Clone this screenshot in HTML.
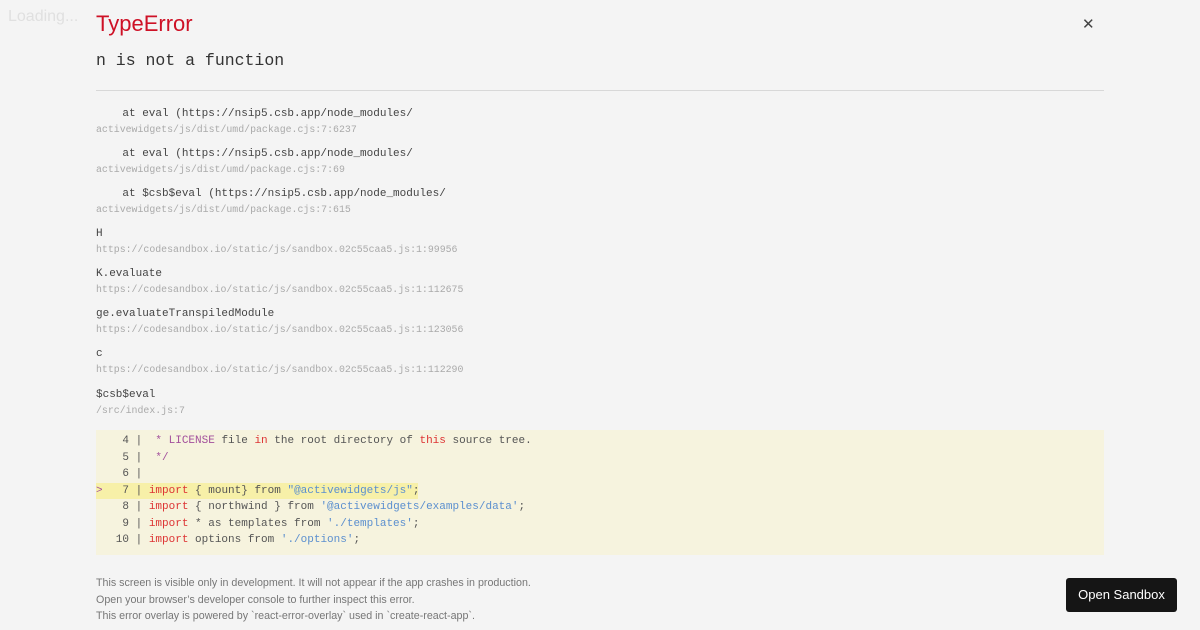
<!DOCTYPE html>
<html><head><style>
body{margin:0;width:1200px;height:630px;background:#f4f4f4;overflow:hidden;position:relative;font-family:"Liberation Sans",sans-serif}
.a{position:absolute}
.load{left:8px;top:8px;font-size:16px;color:#e0e0e0}
.title{left:96px;top:11px;font-size:22px;color:#ce1126}
.msg{left:96px;top:51px;font-family:"Liberation Mono",monospace;font-size:16.5px;color:#333}
.hr{left:96px;top:90px;width:1008px;height:1px;background:#d8d8d8}
.x{left:1082px;top:15px;font-size:15px;color:#444;font-weight:300}
.f{position:absolute;left:96px;font-family:"Liberation Mono",monospace}
.f .m{font-size:11px;color:#444;white-space:pre;height:16px}
.f .s{font-size:9.9px;color:#aaa;white-space:pre}
.code{left:96px;top:430px;width:1008px;height:125px;background:#f6f3de;font-family:"Liberation Mono",monospace;font-size:11px;color:#555}
.code div{position:absolute;left:0;width:1008px;height:16px;line-height:16px;white-space:pre}
.hl{background:#f7f0a8;width:322px!important}
.r{color:#d33}.p{color:#a3509c}.b{color:#5b8fcf}
.foot{left:96px;top:575px;font-size:10.7px;color:#777;line-height:16.5px}
.btn{left:1066px;top:578px;width:111px;height:34px;background:#151515;border-radius:3px;color:#fff;font-size:13px;text-align:center;line-height:34px}
</style></head><body>
<div class="a load">Loading...</div>
<div class="a title">TypeError</div>
<div class="a msg">n is not a function</div>
<div class="a x">✕</div>
<div class="a hr"></div>
<div class="f" style="top:108px"><div class="m">    at eval (https://nsip5.csb.app/node_modules/</div><div class="s">activewidgets/js/dist/umd/package.cjs:7:6237</div></div>
<div class="f" style="top:148px"><div class="m">    at eval (https://nsip5.csb.app/node_modules/</div><div class="s">activewidgets/js/dist/umd/package.cjs:7:69</div></div>
<div class="f" style="top:188px"><div class="m">    at $csb$eval (https://nsip5.csb.app/node_modules/</div><div class="s">activewidgets/js/dist/umd/package.cjs:7:615</div></div>
<div class="f" style="top:228px"><div class="m">H</div><div class="s">https://codesandbox.io/static/js/sandbox.02c55caa5.js:1:99956</div></div>
<div class="f" style="top:268px"><div class="m">K.evaluate</div><div class="s">https://codesandbox.io/static/js/sandbox.02c55caa5.js:1:112675</div></div>
<div class="f" style="top:308px"><div class="m">ge.evaluateTranspiledModule</div><div class="s">https://codesandbox.io/static/js/sandbox.02c55caa5.js:1:123056</div></div>
<div class="f" style="top:348px"><div class="m">c</div><div class="s">https://codesandbox.io/static/js/sandbox.02c55caa5.js:1:112290</div></div>
<div class="f" style="top:389px"><div class="m">$csb$eval</div><div class="s">/src/index.js:7</div></div>
<div class="a code">
<div style="top:3px">    4 |  <span class="p">* LICENSE</span> file <span class="r">in</span> the root directory of <span class="r">this</span> source tree.</div>
<div style="top:20px">    5 |  <span class="p">*/</span></div>
<div style="top:36px">    6 |</div>
<div class="hl" style="top:53px"><span class="p">&gt;</span>   7 | <span class="r">import</span> { mount} from <span class="b">"@activewidgets/js"</span>;</div>
<div style="top:69px">    8 | <span class="r">import</span> { northwind } from <span class="b">'@activewidgets/examples/data'</span>;</div>
<div style="top:86px">    9 | <span class="r">import</span> * as templates from <span class="b">'./templates'</span>;</div>
<div style="top:102px">   10 | <span class="r">import</span> options from <span class="b">'./options'</span>;</div>
</div>
<div class="a foot">This screen is visible only in development. It will not appear if the app crashes in production.<br>Open your browser’s developer console to further inspect this error.<br>This error overlay is powered by `react-error-overlay` used in `create-react-app`.</div>
<div class="a btn">Open Sandbox</div>
</body></html>
